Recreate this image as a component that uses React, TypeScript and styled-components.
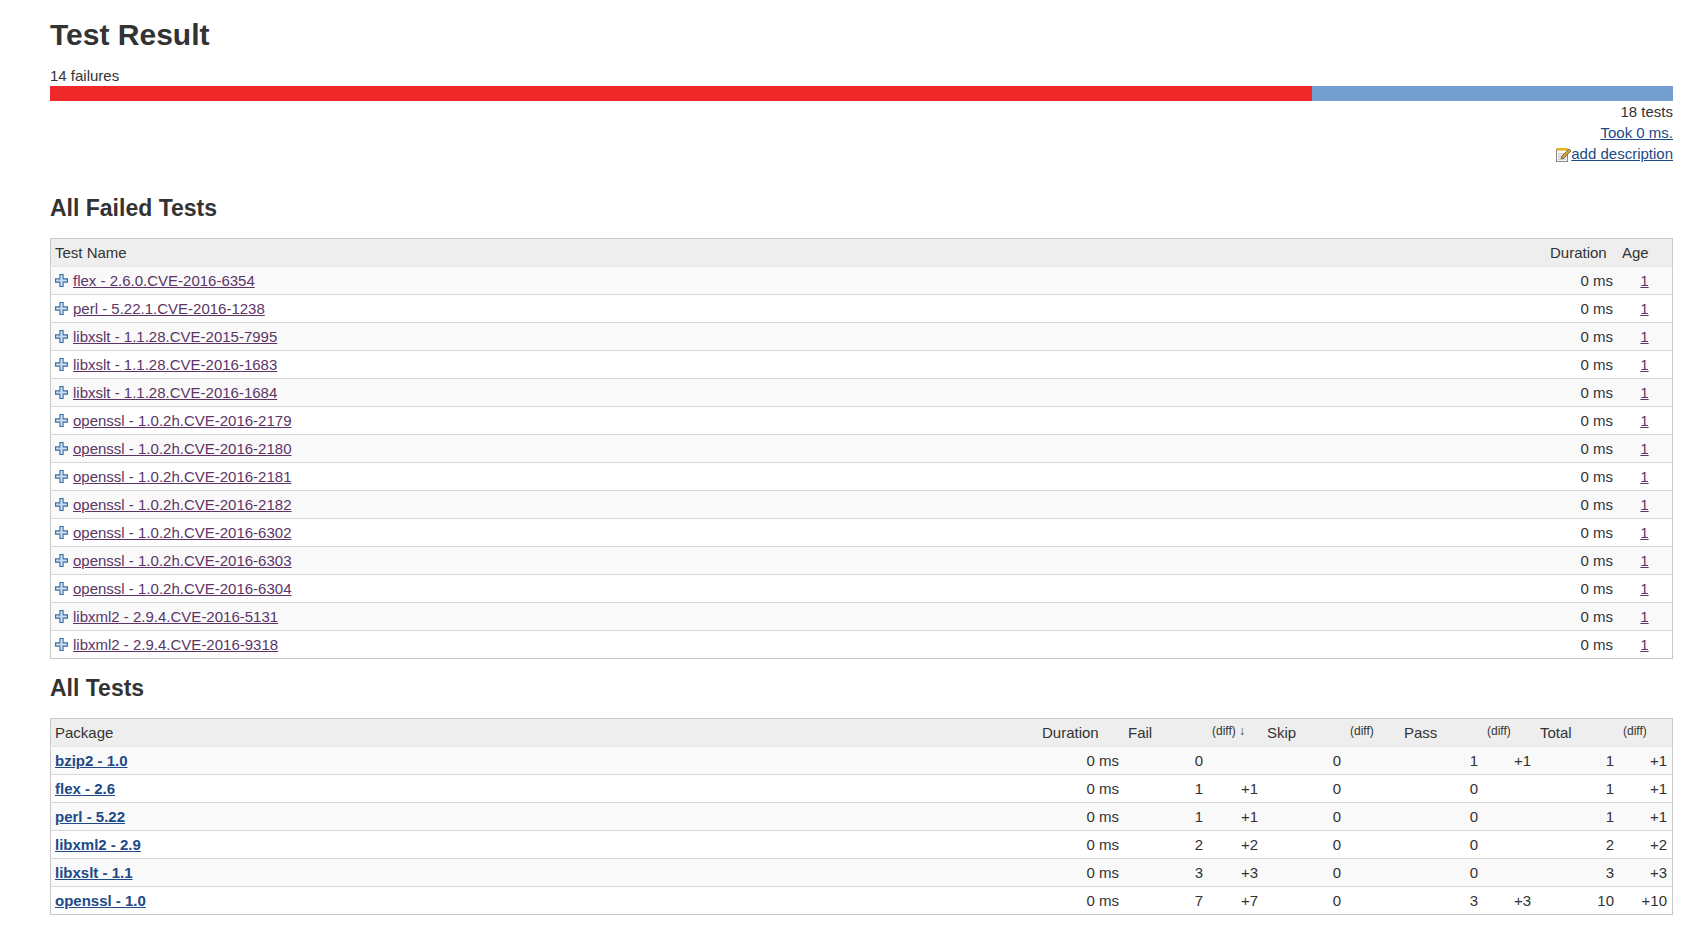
import React from "react";
import styled, { createGlobalStyle } from "styled-components";

const Global = createGlobalStyle`
  html, body { margin: 0; padding: 0; background: #fff; }
  body { font-family: "Liberation Sans", Arial, sans-serif; font-size: 15px; color: #333; }
`;

const Page = styled.div`
  padding: 17px 15px 20px 50px;
`;
const Title = styled.h1`
  margin: 0;
  font-size: 30px;
  line-height: 36px;
  font-weight: bold;
  color: #333;
`;
const Failures = styled.div`
  margin-top: 12px;
  line-height: 21px;
`;
const Bar = styled.div`
  display: flex;
  height: 15px;
`;
const Seg = styled.div<{ $c: string; $w: number }>`
  background: ${(p) => p.$c};
  flex: ${(p) => p.$w};
`;
const RightInfo = styled.div`
  display: flex;
  flex-direction: column;
  align-items: flex-end;
  line-height: 21px;
`;
const Link = styled.a<{ $c?: string; $bold?: boolean }>`
  color: ${(p) => p.$c || "#204a87"};
  text-decoration: underline;
  font-weight: ${(p) => (p.$bold ? "bold" : "normal")};
  cursor: pointer;
`;
const H2 = styled.h2<{ $mt: number }>`
  margin: ${(p) => p.$mt}px 0 0;
  font-size: 23px;
  line-height: 30px;
  font-weight: bold;
  color: #333;
`;
const Table = styled.table<{ $mt: number }>`
  margin-top: ${(p) => p.$mt}px;
  width: 100%;
  border-collapse: collapse;
  border: 1px solid #c8c8c8;
  table-layout: fixed;
`;
const Th = styled.th<{ $w?: number }>`
  ${(p) => (p.$w ? `width: ${p.$w}px;` : "")}
  background: #eeeeee;
  text-align: left;
  font-weight: normal;
  height: 27px;
  padding: 0 4px;
  white-space: nowrap;
  border-bottom: 1px solid #e4e4e4;
`;
const Diff = styled.span`
  font-size: 12px;
  vertical-align: 3px;
`;
const Tr = styled.tr`
  &:nth-child(odd) td { background: #f9f9f9; }
  &:nth-child(even) td { background: #fff; }
`;
const Td = styled.td<{ $a?: string }>`
  height: 27px;
  padding: 0 5px 0 4px;
  text-align: ${(p) => p.$a || "right"};
  border-top: 1px solid #d6d6d6;
  white-space: nowrap;
`;
const NameCell = styled.span`
  display: inline-flex;
  align-items: center;
  gap: 5px;
`;

const Plus = () => (
  <svg width="13" height="13" viewBox="0 0 12 12">
    <path d="M4.5 0.5h3v4h4v3h-4v4h-3v-4h-4v-3h4z" fill="#c9dcf0" stroke="#3b6ea5" strokeWidth="1" />
  </svg>
);

const Notepad = () => (
  <svg width="16" height="16" viewBox="0 0 16 16" style={{ verticalAlign: "-3px" }}>
    <rect x="1.5" y="3.5" width="11" height="12" fill="#f4f4f0" stroke="#888" />
    <rect x="1.5" y="2" width="11" height="2.5" fill="#e8b21a" />
    <line x1="3" y1="8" x2="11" y2="8" stroke="#bbb" />
    <line x1="3" y1="10.5" x2="11" y2="10.5" stroke="#bbb" />
    <line x1="3" y1="13" x2="11" y2="13" stroke="#bbb" />
    <path d="M6 13l1-3 7-7 2 2-7 7z" fill="#e0a030" stroke="#555" strokeWidth="0.8" />
  </svg>
);

const failed = [
  "flex - 2.6.0.CVE-2016-6354",
  "perl - 5.22.1.CVE-2016-1238",
  "libxslt - 1.1.28.CVE-2015-7995",
  "libxslt - 1.1.28.CVE-2016-1683",
  "libxslt - 1.1.28.CVE-2016-1684",
  "openssl - 1.0.2h.CVE-2016-2179",
  "openssl - 1.0.2h.CVE-2016-2180",
  "openssl - 1.0.2h.CVE-2016-2181",
  "openssl - 1.0.2h.CVE-2016-2182",
  "openssl - 1.0.2h.CVE-2016-6302",
  "openssl - 1.0.2h.CVE-2016-6303",
  "openssl - 1.0.2h.CVE-2016-6304",
  "libxml2 - 2.9.4.CVE-2016-5131",
  "libxml2 - 2.9.4.CVE-2016-9318",
];

const pkgs: [string, string, string, string, string, string, string, string][] = [
  ["bzip2 - 1.0", "0", "", "0", "1", "+1", "1", "+1"],
  ["flex - 2.6", "1", "+1", "0", "0", "", "1", "+1"],
  ["perl - 5.22", "1", "+1", "0", "0", "", "1", "+1"],
  ["libxml2 - 2.9", "2", "+2", "0", "0", "", "2", "+2"],
  ["libxslt - 1.1", "3", "+3", "0", "0", "", "3", "+3"],
  ["openssl - 1.0", "7", "+7", "0", "3", "+3", "10", "+10"],
];

const purple = "#5c3566";

export default function App() {
  return (
    <Page>
      <Global />
      <Title>Test Result</Title>
      <Failures>14 failures</Failures>
      <Bar>
        <Seg $c="#ef2929" $w={14} />
        <Seg $c="#729fcf" $w={4} />
      </Bar>
      <RightInfo>
        <div>18 tests</div>
        <Link>Took 0 ms.</Link>
        <div>
          <Notepad />
          <Link>add description</Link>
        </div>
      </RightInfo>

      <H2 $mt={29}>All Failed Tests</H2>
      <Table $mt={15}>
        <thead>
          <tr>
            <Th>Test Name</Th>
            <Th $w={64}>Duration</Th>
            <Th $w={46}>Age</Th>
          </tr>
        </thead>
        <tbody>
          {failed.map((n) => (
            <Tr key={n}>
              <Td $a="left">
                <NameCell>
                  <Plus />
                  <Link $c={purple}>{n}</Link>
                </NameCell>
              </Td>
              <Td>0 ms</Td>
              <Td $a="center">
                <Link $c={purple}>1</Link>
              </Td>
            </Tr>
          ))}
        </tbody>
      </Table>

      <H2 $mt={14}>All Tests</H2>
      <Table $mt={15}>
        <thead>
          <tr>
            <Th>Package</Th>
            <Th $w={78}>Duration</Th>
            <Th $w={76}>Fail</Th>
            <Th $w={47}>
              <Diff>(diff) ↓</Diff>
            </Th>
            <Th $w={75}>Skip</Th>
            <Th $w={46}>
              <Diff>(diff)</Diff>
            </Th>
            <Th $w={75}>Pass</Th>
            <Th $w={45}>
              <Diff>(diff)</Diff>
            </Th>
            <Th $w={75}>Total</Th>
            <Th $w={45}>
              <Diff>(diff)</Diff>
            </Th>
          </tr>
        </thead>
        <tbody>
          {pkgs.map((r) => (
            <Tr key={r[0]}>
              <Td $a="left">
                <Link $bold>{r[0]}</Link>
              </Td>
              <Td>0 ms</Td>
              <Td>{r[1]}</Td>
              <Td>{r[2]}</Td>
              <Td>{r[3]}</Td>
              <Td></Td>
              <Td>{r[4]}</Td>
              <Td>{r[5]}</Td>
              <Td>{r[6]}</Td>
              <Td>{r[7]}</Td>
            </Tr>
          ))}
        </tbody>
      </Table>
    </Page>
  );
}
